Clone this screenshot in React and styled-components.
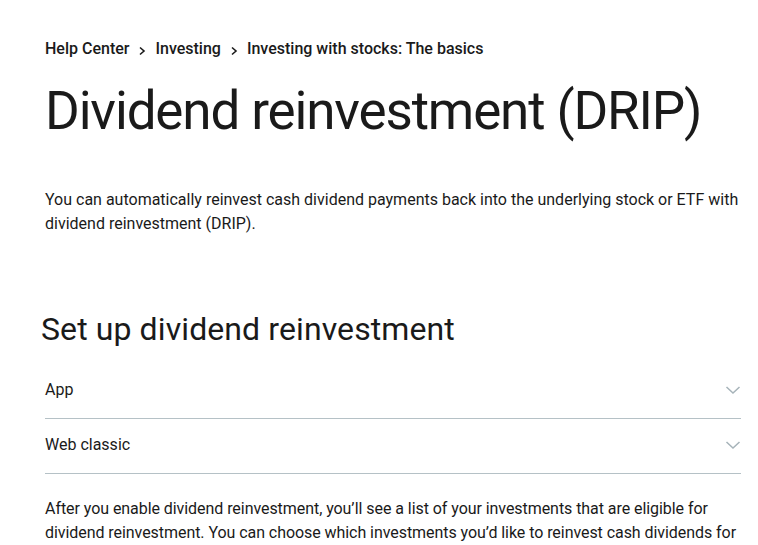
import styled, { createGlobalStyle } from "styled-components";

const GlobalStyle = createGlobalStyle`
  body {
    margin: 0;
    background: #ffffff;
    color: #1a1a1a;
    font-family: Roboto, "Liberation Sans", sans-serif;
  }
`;

const Page = styled.main`
  width: 696px;
  padding: 37px 0 0 45px;
`;

const Crumbs = styled.nav`
  display: flex;
  align-items: center;
  gap: 8px;
  font-size: 16px;
  line-height: 24px;
  font-weight: 500;
  color: #1a1a1a;
`;

const Crumb = styled.span`
  white-space: nowrap;
`;

const Sep = styled.svg`
  width: 10px;
  height: 10px;
  margin-top: 4px;
`;

const Title = styled.h1`
  margin: 18px 0 0;
  font-weight: 400;
  font-size: 53px;
  line-height: 64px;
  letter-spacing: -1.15px;
  white-space: nowrap;
  color: #1a1a1a;
`;

const Lead = styled.p`
  margin: 45px 0 0;
  font-size: 16px;
  line-height: 24px;
`;

const Heading = styled.h2`
  margin: 73px 0 0 -4px;
  font-weight: 400;
  font-size: 32px;
  line-height: 40px;
  letter-spacing: 0.1px;
`;

const Accordion = styled.div`
  margin-top: 15px;
`;

const Row = styled.div`
  display: flex;
  align-items: center;
  justify-content: space-between;
  padding: 14px 0 16px;
  line-height: 24px;
  border-bottom: 1px solid #b5c1c6;
  font-size: 16px;
`;

const Chevron = styled.svg`
  width: 16px;
  height: 10px;
`;

const Body = styled.p`
  margin: 23px 0 0;
  font-size: 16px;
  line-height: 24px;
  letter-spacing: -0.06px;
`;

const Arrow = () => (
  <Sep viewBox="0 0 10 10">
    <path d="M3 1.5 L7 5 L3 8.5" fill="none" stroke="#1a1a1a" strokeWidth="1.6" />
  </Sep>
);

const Down = () => (
  <Chevron viewBox="0 0 16 10">
    <path d="M1.5 2 L8 8 L14.5 2" fill="none" stroke="#a6b3b9" strokeWidth="1.5" />
  </Chevron>
);

const sections = ["App", "Web classic"];

export default function App() {
  return (
    <>
      <GlobalStyle />
      <Page>
        <Crumbs>
          <Crumb>Help Center</Crumb>
          <Arrow />
          <Crumb>Investing</Crumb>
          <Arrow />
          <Crumb>Investing with stocks: The basics</Crumb>
        </Crumbs>
        <Title>Dividend reinvestment (DRIP)</Title>
        <Lead>
          You can automatically reinvest cash dividend payments back into the
          underlying stock or ETF with dividend reinvestment (DRIP).
        </Lead>
        <Heading>Set up dividend reinvestment</Heading>
        <Accordion>
          {sections.map((s) => (
            <Row key={s}>
              <span>{s}</span>
              <Down />
            </Row>
          ))}
        </Accordion>
        <Body>
          After you enable dividend reinvestment, you’ll see a list of your
          investments that are eligible for dividend reinvestment. You can
          choose which investments you’d like to reinvest cash dividends for
          in each of your accounts.
        </Body>
      </Page>
    </>
  );
}
